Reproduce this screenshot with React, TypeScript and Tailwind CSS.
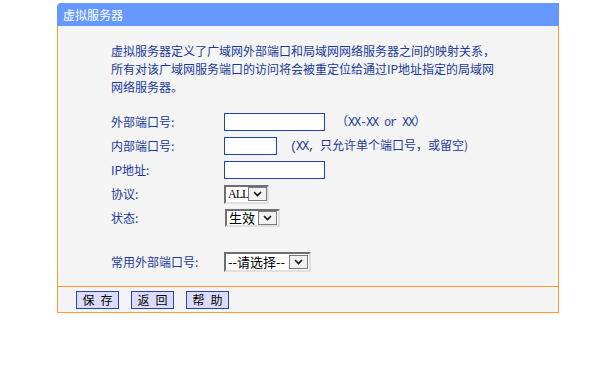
import React from "react";

const CJK = { fontFamily: '"Noto Sans CJK SC", "Noto Sans", sans-serif' };
const MONO = { fontFamily: '"Liberation Mono", "Noto Sans CJK SC", monospace' };
const SERIF = { fontFamily: '"Liberation Serif", "Noto Sans CJK SC", serif' };

function Chevron() {
  return (
    <svg width="9" height="6" viewBox="0 0 9 6">
      <polyline points="1,1 4.5,4.5 8,1" fill="none" stroke="#111" strokeWidth="1.6" />
    </svg>
  );
}

function Sel({ w, h, children }: { w: string; h: string; children: React.ReactNode }) {
  return (
    <div
      className={`${w} ${h} border-2 border-t-[#6e6e6e] border-l-[#6e6e6e] border-r-[#e0e0e0] border-b-[#e0e0e0] bg-white flex items-center`}
    >
      <div className="flex-1 pl-[2px] text-black whitespace-nowrap flex items-center">{children}</div>
      <div className="shrink-0 w-[19px] h-[14px] mr-[1px] border border-[#7a7a7a] bg-[#f2f2f2] flex items-center justify-center">
        <Chevron />
      </div>
    </div>
  );
}

function Btn({ a, b }: { a: string; b: string }) {
  return (
    <div className="w-[43px] h-[18px] border border-[#2343a6] bg-[#dcdcf8] flex items-center justify-center gap-[6px] text-[12px] text-black leading-none">
      <span>{a}</span>
      <span>{b}</span>
    </div>
  );
}

function Row({ label, children }: { label: React.ReactNode; children: React.ReactNode }) {
  return (
    <div className="h-[24px] flex items-center">
      <div className="w-[113px] text-[12px] leading-none">{label}</div>
      <div className="flex items-center">{children}</div>
    </div>
  );
}

export default function App() {
  return (
    <div className="w-[589px] h-[384px] bg-white pt-[3px] pl-[57px]" style={CJK}>
      <div className="w-[502px]">
        <div className="h-[23px] bg-[#6699ff] rounded-tl-[4px] text-white text-[12px] pl-[6px] flex items-center">
          虚拟服务器
        </div>
        <div className="border-x border-[#ff9933] bg-[#f4f4f4] pl-[53px] pt-[16px] pb-[12px] text-[#1a3a98]">
          <p className="text-[12px] leading-[18px] whitespace-nowrap">
            虚拟服务器定义了广域网外部端口和局域网网络服务器之间的映射关系，
            <br />
            所有对该广域网服务端口的访问将会被重定位给通过IP地址指定的局域网
            <br />
            网络服务器。
          </p>
          <div className="mt-[14px]">
            <Row label="外部端口号:">
              <div className="w-[101px] h-[18px] border border-[#2343a6] bg-white" />
              <span className="ml-[11px] text-[12px] leading-none whitespace-nowrap">
                <span style={CJK}>（</span>
                <span style={MONO} className="text-[12px] tracking-[-1.2px]">XX-XX or XX</span>
                <span style={CJK}>）</span>
              </span>
            </Row>
            <Row label="内部端口号:">
              <div className="w-[53px] h-[18px] border border-[#2343a6] bg-white" />
              <span className="ml-[13px] text-[12px] leading-none whitespace-nowrap">
                <span style={MONO} className="text-[12px] tracking-[-1.2px]">(XX, </span>
                只允许单个端口号，或留空)
              </span>
            </Row>
            <Row label="IP地址:">
              <div className="w-[101px] h-[18px] border border-[#2343a6] bg-white" />
            </Row>
            <Row label="协议:">
              <Sel w="w-[45px]" h="h-[19px]">
                <span style={SERIF} className="text-[12px] leading-[14px] tracking-[-1px]">ALL</span>
              </Sel>
            </Row>
            <Row label="状态:">
              <div className="ml-[1px]">
                <Sel w="w-[55px]" h="h-[18px]">
                  <span className="text-[13px] leading-[14px]">生效</span>
                </Sel>
              </div>
            </Row>
            <div className="h-[20px]" />
            <Row label="常用外部端口号:">
              <Sel w="w-[87px]" h="h-[20px]">
                <span className="text-[13px] leading-[16px]">--请选择--</span>
              </Sel>
            </Row>
          </div>
        </div>
        <div className="h-[27px] border border-[#ff9933] bg-[#f4f4f4] flex items-center pl-[18px] gap-[12px]">
          <Btn a="保" b="存" />
          <Btn a="返" b="回" />
          <Btn a="帮" b="助" />
        </div>
      </div>
    </div>
  );
}
